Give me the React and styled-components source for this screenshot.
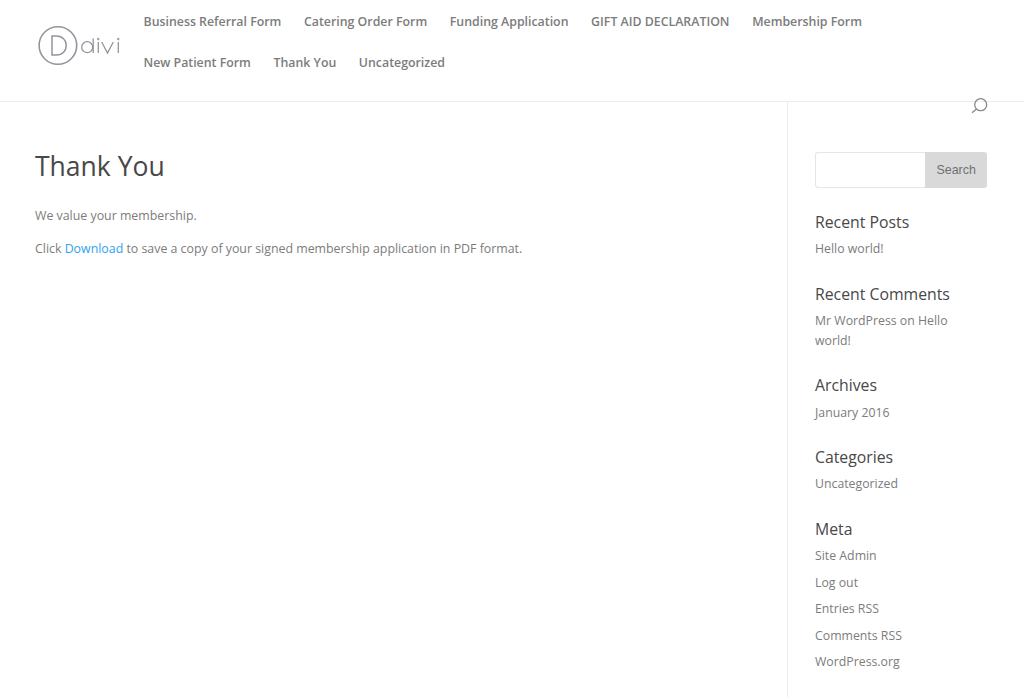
import React from "react";
import styled, { createGlobalStyle } from "styled-components";

const GlobalStyle = createGlobalStyle`
  html, body {
    margin: 0;
    padding: 0;
    background: #fff;
    font-family: "Open Sans", sans-serif;
    font-size: 13px;
    color: #666;
  }
`;

const Page = styled.div`
  position: relative;
  width: 1024px;
  height: 697px;
  overflow: hidden;
`;

const Header = styled.header`
  display: flex;
  height: 101px;
  padding-left: 37px;
  border-bottom: 1px solid #ececec;
`;

const Logo = styled.svg`
  width: 85px;
  height: 42px;
  margin-top: 25px;
  flex: none;
`;

const Nav = styled.nav`
  display: flex;
  flex-wrap: wrap;
  align-content: flex-start;
  column-gap: 22.6px;
  width: 760px;
  margin-left: 21.5px;
  padding-top: 1px;
`;

const NavLink = styled.a`
  font-size: 12.35px;
  font-weight: 600;
  line-height: 41px;
  color: #7c7c7c;
`;

const SearchIcon = styled.svg`
  position: absolute;
  top: 97px;
  left: 970px;
  width: 18px;
  height: 18px;
`;

const Body = styled.div`
  display: flex;
  height: 595px;
`;

const Main = styled.main`
  width: 752px;
  padding: 48px 0 0 35px;
  border-right: 1px solid #ececec;
`;

const Title = styled.h1`
  margin: 0 0 23px;
  font-size: 26.5px;
  font-weight: 400;
  line-height: 33px;
  color: #484848;
`;

const Paragraph = styled.p`
  margin: 0 0 13px;
  font-size: 12.37px;
  line-height: 20px;
  color: #7c7c7c;
`;

const DownloadLink = styled.a`
  color: #2ea3f2;
`;

const Sidebar = styled.aside`
  width: 172px;
  padding: 50px 0 0 27px;
`;

const SearchForm = styled.form`
  display: flex;
  height: 36px;
  margin-bottom: 24px;
`;

const SearchInput = styled.div`
  width: 110px;
  border: 1px solid #e6e6e6;
  border-right: none;
  border-radius: 3px 0 0 3px;
`;

const SearchButton = styled.div`
  width: 62px;
  display: flex;
  align-items: center;
  justify-content: center;
  background: #d9d9d9;
  border-radius: 0 3px 3px 0;
  font-family: "Liberation Sans", Arial, sans-serif;
  font-size: 12.4px;
  color: #707070;
`;

const Widget = styled.section`
  margin-bottom: 24.3px;
`;

const WidgetTitle = styled.h4`
  margin: 0 0 7.4px;
  font-size: 15.8px;
  font-weight: 400;
  line-height: 20px;
  color: #484848;
`;

const WidgetItem = styled.div`
  max-width: 165px;
  font-size: 12.3px;
  line-height: 20px;
  margin-bottom: ${(p) => (p.$tight ? "6.5px" : "0")};
  color: #7c7c7c;
`;

const navItems = [
  "Business Referral Form",
  "Catering Order Form",
  "Funding Application",
  "GIFT AID DECLARATION",
  "Membership Form",
  "New Patient Form",
  "Thank You",
  "Uncategorized",
];

const widgets = [
  { title: "Recent Posts", items: ["Hello world!"] },
  { title: "Recent Comments", items: ["Mr WordPress on Hello world!"] },
  { title: "Archives", items: ["January 2016"] },
  { title: "Categories", items: ["Uncategorized"] },
  {
    title: "Meta",
    tight: true,
    items: ["Site Admin", "Log out", "Entries RSS", "Comments RSS", "WordPress.org"],
  },
];

export default function App() {
  return (
    <Page>
      <GlobalStyle />
      <Header>
        <Logo viewBox="0 0 85 42" fill="none" stroke="#94949e">
          <circle cx="20.900" cy="20.500" r="18.800" strokeWidth="1.600" />
          <path d="M15 11v19h4.500c6 0 9.700-4.200 9.700-9.500S25.500 11 19.500 11z" strokeWidth="1.500" />
          <circle cx="50.200" cy="22.200" r="5.500" strokeWidth="1.300" />
          <path d="M56.200 13.500v14.500M61.300 17v11M64.700 17l5.800 11 5.800-11M81.300 17v11" strokeWidth="1.300" />
          <circle cx="61.300" cy="14" r=".8" fill="#94949e" />
          <circle cx="81.300" cy="14" r=".8" fill="#94949e" />
        </Logo>
        <Nav>
          {navItems.map((item) => (
            <NavLink key={item}>{item}</NavLink>
          ))}
        </Nav>
      </Header>
      <SearchIcon viewBox="0 0 18 18" fill="none" stroke="#888" strokeWidth="1.300">
        <circle cx="10.700" cy="7.700" r="6" />
        <path d="M6.500 12 2 15.700" />
      </SearchIcon>
      <Body>
        <Main>
          <Title>Thank You</Title>
          <Paragraph>We value your membership.</Paragraph>
          <Paragraph>
            Click <DownloadLink>Download</DownloadLink> to save a copy of your signed
            membership application in PDF format.
          </Paragraph>
        </Main>
        <Sidebar>
          <SearchForm>
            <SearchInput />
            <SearchButton>Search</SearchButton>
          </SearchForm>
          {widgets.map((w) => (
            <Widget key={w.title}>
              <WidgetTitle>{w.title}</WidgetTitle>
              {w.items.map((item) => (
                <WidgetItem key={item} $tight={w.tight}>
                  {item}
                </WidgetItem>
              ))}
            </Widget>
          ))}
        </Sidebar>
      </Body>
    </Page>
  );
}
